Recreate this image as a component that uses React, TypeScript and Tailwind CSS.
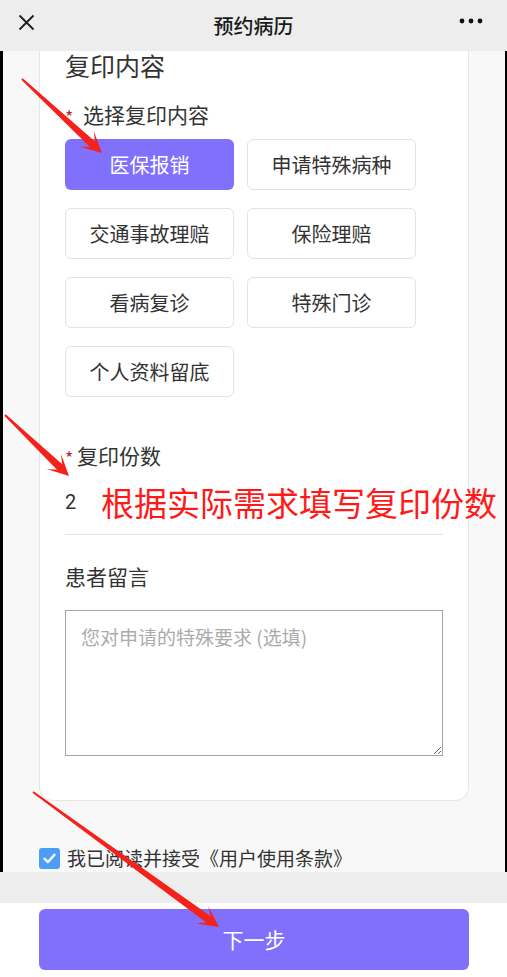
import React from "react";

const FONT = '"Noto Sans CJK SC", "Noto Sans", "Liberation Sans", sans-serif';

function arrowPoints(sx: number, sy: number, tx: number, ty: number) {
  const dx = tx - sx;
  const dy = ty - sy;
  const len = Math.hypot(dx, dy);
  const ux = dx / len;
  const uy = dy / len;
  const nx = -uy;
  const ny = ux;
  const headLen = 21;
  const notch = 13;
  const headW = 10.5;
  const p = (x: number, y: number) => `${x.toFixed(1)},${y.toFixed(1)}`;
  const nX = tx - ux * notch;
  const nY = ty - uy * notch;
  const bX = tx - ux * headLen;
  const bY = ty - uy * headLen;
  return [
    p(sx + nx * 1, sy + ny * 1),
    p(nX + nx * 3.8, nY + ny * 3.8),
    p(bX + nx * headW, bY + ny * headW),
    p(tx, ty),
    p(bX - nx * headW, bY - ny * headW),
    p(nX - nx * 3.8, nY - ny * 3.8),
    p(sx - nx * 1, sy - ny * 1),
  ].join(" ");
}

const options = [
  "医保报销",
  "申请特殊病种",
  "交通事故理赔",
  "保险理赔",
  "看病复诊",
  "特殊门诊",
  "个人资料留底",
];

export default function App() {
  return (
    <div
      className="relative w-[507px] h-[977px] overflow-hidden bg-white text-[#333]"
      style={{ fontFamily: FONT }}
    >
      {/* Header */}
      <div className="relative flex h-[51px] items-center justify-center bg-[#ededed]">
        <svg className="absolute left-[18px] top-[14px]" width="17" height="17" viewBox="0 0 17 17">
          <path d="M1.5 1.5 L15.5 15.5 M15.5 1.5 L1.5 15.5" stroke="#1e1e1e" strokeWidth="1.8" fill="none" />
        </svg>
        <span className="text-[20px] font-medium leading-[26px] text-[#1a1a1a]">预约病历</span>
        <svg className="absolute left-[457px] top-[17px]" width="28" height="8" viewBox="0 0 28 8">
          <circle cx="5" cy="4" r="2.4" fill="#111" />
          <circle cx="14" cy="4" r="2.4" fill="#111" />
          <circle cx="23" cy="4" r="2.4" fill="#111" />
        </svg>
      </div>

      {/* Scroll area */}
      <div className="h-[821px] overflow-hidden bg-[#f8f8f8] border-l-[3px] border-r-[2px] border-black">
        <div className="ml-[36px] mr-[36px] rounded-b-[14px] border border-t-0 border-[#e6e6e6] bg-white px-[25px] pb-[44px]">
          <div className="text-[25px] leading-[28px] text-[#333]">复印内容</div>

          <div className="mt-[21px] flex h-[28px] items-center text-[21px] leading-[28px]">
            <span className="mt-[4px] w-[18px] text-[18px] text-[#c0272d]">*</span>
            <span>选择复印内容</span>
          </div>

          <div className="mt-[11px] grid grid-cols-[169px_169px] gap-x-[13px] gap-y-[18px]">
            {options.map((o, i) => (
              <div
                key={o}
                className={
                  i === 0
                    ? "flex h-[51px] items-center justify-center rounded-[6px] bg-[#8070fb] text-[20px] text-white"
                    : "flex h-[51px] items-center justify-center rounded-[6px] border border-[#e3e3e3] bg-white text-[20px] text-[#333]"
                }
              >
                {o}
              </div>
            ))}
          </div>

          <div className="mt-[44px] flex h-[28px] items-center text-[21px] leading-[28px]">
            <span className="mt-[4px] w-[12px] text-[18px] text-[#c0272d]">*</span>
            <span>复印份数</span>
          </div>

          <div className="mt-[13px] border-b border-[#e3e3e3] pb-[12px]">
            <div className="flex h-[40px] items-center">
              <span
                className="w-[36px] shrink-0 text-[20px] text-[#333]"
                style={{ fontFamily: '"Roboto", "Liberation Sans", sans-serif' }}
              >
                2
              </span>
              <span className="shrink-0 whitespace-nowrap text-[33px] leading-[40px] text-[#ff1a1a]">
                根据实际需求填写复印份数
              </span>
            </div>
          </div>

          <div className="mt-[27px] h-[28px] text-[21px] leading-[28px]">患者留言</div>

          <textarea
            className="mt-[20px] block h-[146px] w-full border-[1.5px] border-[#a6a6a6] bg-white px-[15px] pt-[14px] text-[19px] leading-[24px] outline-none placeholder:text-[#ababab]"
            placeholder="您对申请的特殊要求 (选填)"
            style={{ fontFamily: FONT }}
          />
        </div>

        <div className="ml-[36px] mt-[43px] flex h-[28px] items-center">
          <div className="flex h-[21px] w-[21px] items-center justify-center rounded-[3px] bg-[#4c9df5]">
            <svg width="15" height="15" viewBox="0 0 15 15">
              <path d="M2.5 7.8 L6 11 L12.5 3.8" stroke="#fff" strokeWidth="2.4" fill="none" strokeLinecap="round" strokeLinejoin="round" />
            </svg>
          </div>
          <span className="ml-[7px] text-[19px] leading-[28px] text-[#333]">我已阅读并接受《用户使用条款》</span>
        </div>
      </div>

      {/* Gray band */}
      <div className="h-[31px] bg-[#ededed]" />

      {/* Bottom bar */}
      <div className="h-[74px] bg-white pl-[39px] pr-[38px] pt-[6px]">
        <div className="flex h-[61px] items-center justify-center rounded-[6px] bg-[#8070fb] text-[21px] text-white">
          下一步
        </div>
      </div>

      {/* Annotation arrows */}
      <svg className="pointer-events-none absolute left-0 top-0" width="507" height="977" viewBox="0 0 507 977">
        <polygon points={arrowPoints(22, 79, 102, 153)} fill="#f5221b" />
        <polygon points={arrowPoints(5, 415, 69, 476)} fill="#f5221b" />
        <polygon points={arrowPoints(33, 792, 219, 927)} fill="#f5221b" />
      </svg>
    </div>
  );
}
